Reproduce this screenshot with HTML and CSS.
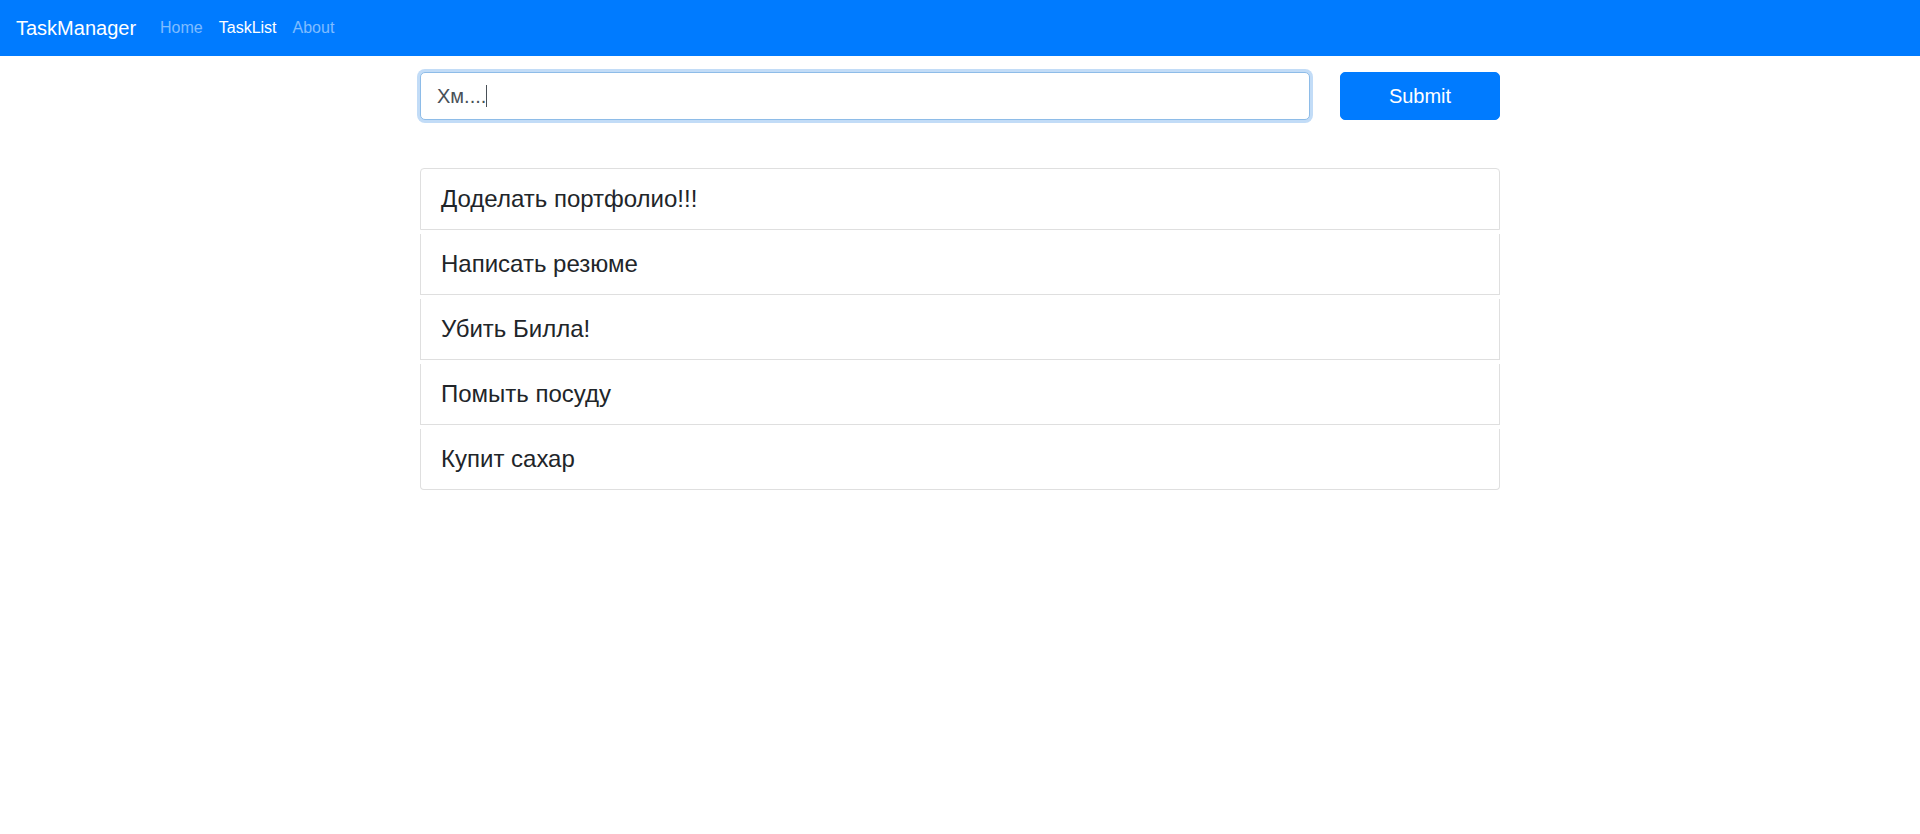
FILE: index.html
```html
<!DOCTYPE html>
<html lang="ru">
<head>
<meta charset="utf-8">
<meta name="viewport" content="width=device-width, initial-scale=1">
<title>TaskManager</title>
<link rel="stylesheet" href="styles.css">
</head>
<body>
<nav class="navbar">
  <a class="navbar-brand" href="#">TaskManager</a>
  <ul class="navbar-nav">
    <li><a class="nav-link" href="#">Home</a></li>
    <li><a class="nav-link active" href="#" aria-current="page">TaskList</a></li>
    <li><a class="nav-link" href="#">About</a></li>
  </ul>
</nav>
<main class="container">
  <form class="task-form">
    <div class="field">
      <input class="task-input" type="text" value="Хм...." aria-label="Task" autocomplete="off" spellcheck="false">
      <span class="caret"></span>
    </div>
    <button class="submit" type="submit">Submit</button>
  </form>
  <ul class="task-list">
    <li class="task">Доделать портфолио!!!</li>
    <li class="task">Написать резюме</li>
    <li class="task">Убить Билла!</li>
    <li class="task">Помыть посуду</li>
    <li class="task">Купит сахар</li>
  </ul>
</main>
</body>
</html>
```
FILE: styles.css
```css
* {
  box-sizing: border-box;
}

body {
  margin: 0;
  background: #fff;
  color: #212529;
  font-family: "Liberation Sans", Arial, sans-serif;
  font-size: 16px;
  line-height: 24px;
}

ul {
  list-style: none;
  margin: 0;
  padding: 0;
}

.navbar {
  display: flex;
  align-items: center;
  gap: 16px;
  padding: 8px 16px;
  background: #007bff;
}

.navbar-brand {
  padding: 5px 0;
  color: #fff;
  font-size: 20px;
  line-height: 30px;
  text-decoration: none;
}

.navbar-nav {
  display: flex;
}

.nav-link {
  display: block;
  padding: 8px;
  color: rgba(255, 255, 255, 0.5);
  text-decoration: none;
}

.nav-link.active {
  color: #fff;
}

.container {
  max-width: 1110px;
  margin: 0 auto;
  padding: 16px 15px;
}

.task-form {
  display: flex;
  gap: 30px;
}

.field {
  position: relative;
  flex: 1;
}

.task-input {
  display: block;
  width: 100%;
  height: 48px;
  padding: 8px 16px;
  border: 1px solid #8ebce8;
  border-radius: 5px;
  outline: 0;
  background: #fff;
  box-shadow: 0 0 0 3px #c2dcf7;
  color: #495057;
  caret-color: transparent;
  font-family: inherit;
  font-size: 20px;
  line-height: 30px;
}

.caret {
  position: absolute;
  top: 13px;
  left: 66px;
  width: 1px;
  height: 22px;
  background: #495057;
}

.submit {
  width: 160px;
  height: 48px;
  padding: 8px 16px;
  border: 1px solid #007bff;
  border-radius: 5px;
  background: #007bff;
  color: #fff;
  font-family: inherit;
  font-size: 20px;
  line-height: 30px;
}

.task-list {
  display: flex;
  flex-direction: column;
  gap: 4px;
  margin-top: 48px;
}

.task {
  padding: 12px 20px;
  border: 1px solid #dfdfdf;
  border-top: 0;
  font-size: 24px;
  line-height: 36px;
}

.task:first-child {
  border-top: 1px solid #dfdfdf;
  border-radius: 4px 4px 0 0;
}

.task:last-child {
  border-radius: 0 0 4px 4px;
}
```
